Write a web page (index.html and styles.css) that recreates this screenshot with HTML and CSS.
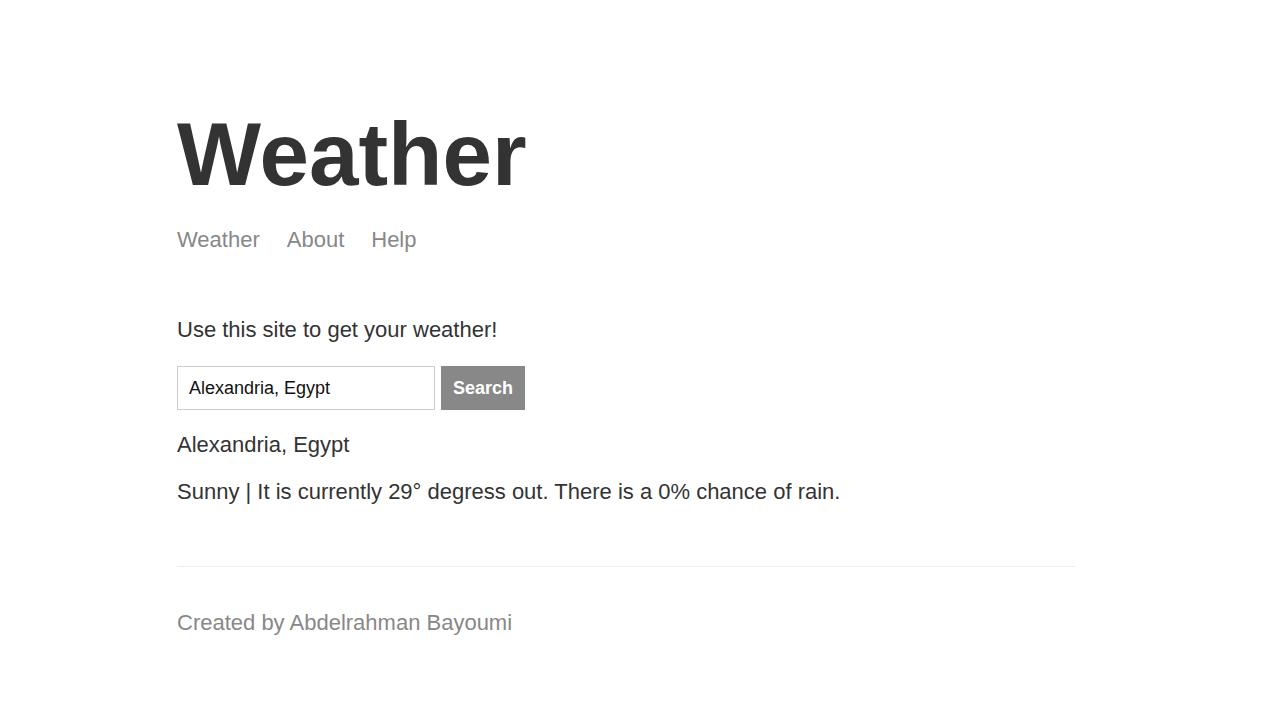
FILE: index.html
```html
<!DOCTYPE html>
<html>
<head>
<meta charset="utf-8">
<title>Weather</title>
<link rel="stylesheet" href="styles.css">
</head>
<body>
<div class="main-content">
  <header class="header">
    <h1 class="title">Weather</h1>
    <nav class="nav">
      <a href="#" class="nav-link">Weather</a>
      <a href="#" class="nav-link">About</a>
      <a href="#" class="nav-link">Help</a>
    </nav>
  </header>
  <p class="intro">Use this site to get your weather!</p>
  <form class="search-form">
    <input class="search-input" type="text" value="Alexandria, Egypt">
    <button class="search-button" type="button">Search</button>
  </form>
  <p class="location">Alexandria, Egypt</p>
  <p class="forecast">Sunny | It is currently 29° degress out. There is a 0% chance of rain.</p>
  <footer class="footer">
    <p class="credit">Created by Abdelrahman Bayoumi</p>
  </footer>
</div>
</body>
</html>
```
FILE: styles.css
```css
html, body {
  margin: 0;
  padding: 0;
  background: #ffffff;
}
body {
  font-family: "Liberation Sans", Arial, sans-serif;
  color: #333333;
}
.main-content {
  width: 898px;
  margin-left: 177px;
  padding-top: 102px;
}
.title {
  margin: 0;
  font-size: 89px;
  font-weight: 700;
  line-height: 104px;
  color: #333333;
}
.nav {
  display: flex;
  gap: 27px;
  margin-top: 21px;
}
.nav-link {
  font-size: 22px;
  color: #888888;
  text-decoration: none;
  line-height: 26px;
}
.intro {
  margin: 64px 0 0;
  font-size: 22px;
  line-height: 26px;
}
.search-form {
  display: flex;
  gap: 6px;
  margin-top: 23px;
}
.search-input {
  box-sizing: border-box;
  width: 258px;
  height: 44px;
  border: 1px solid #cccccc;
  padding: 0 11px;
  font-family: "Liberation Sans", Arial, sans-serif;
  font-size: 18px;
  color: #111111;
  outline: none;
}
.search-button {
  box-sizing: border-box;
  width: 84px;
  height: 44px;
  border: none;
  background: #888888;
  color: #ffffff;
  font-family: "Liberation Sans", Arial, sans-serif;
  font-size: 18px;
  font-weight: 700;
  padding: 0;
}
.location {
  margin: 22px 0 0;
  font-size: 22px;
  line-height: 26px;
}
.forecast {
  margin: 21px 0 0;
  font-size: 22px;
  line-height: 26px;
}
.footer {
  margin-top: 61px;
  border-top: 1px solid #eeeeee;
  padding-top: 43px;
}
.credit {
  margin: 0;
  font-size: 22px;
  line-height: 26px;
  color: #888888;
}
```
